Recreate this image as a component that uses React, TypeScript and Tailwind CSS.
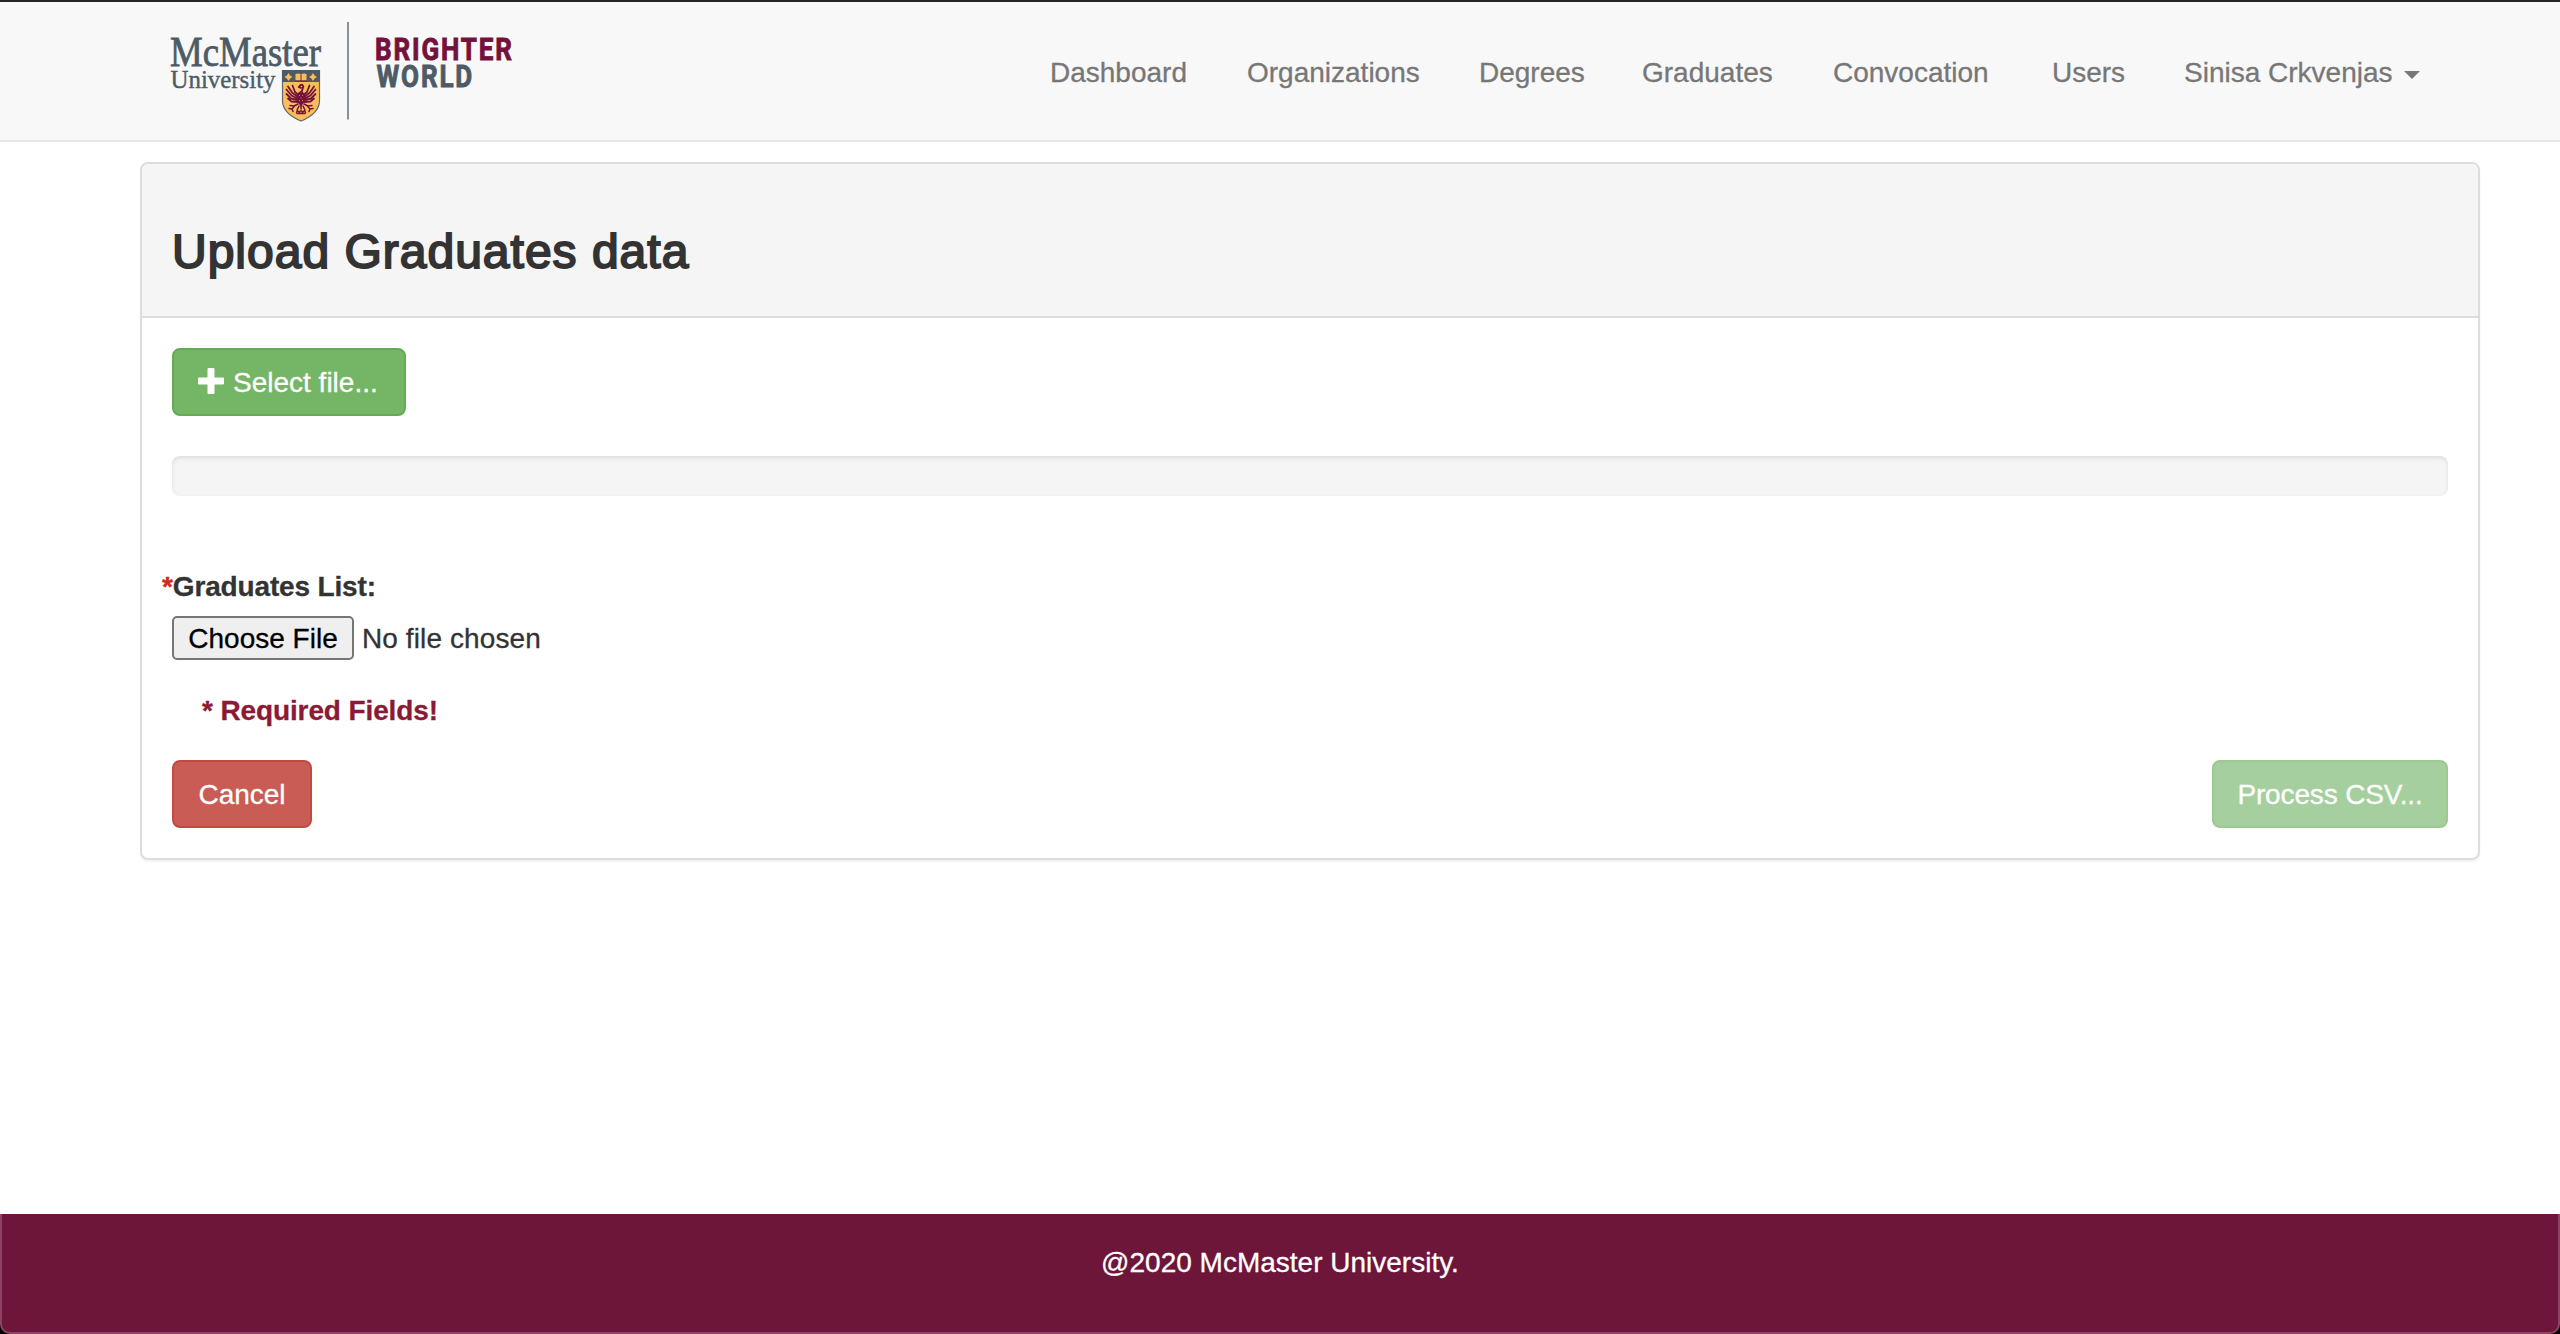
const navItems = [
  { label: "Dashboard", width: "w-[197px]" },
  { label: "Organizations", width: "w-[232px]" },
  { label: "Degrees", width: "w-[163px]" },
  { label: "Graduates", width: "w-[191px]" },
  { label: "Convocation", width: "w-[219px]" },
  { label: "Users", width: "w-[132px]" },
];

function Logo() {
  return (
    <svg width="360" height="102" viewBox="168 20 360 102" className="block overflow-visible [-webkit-text-stroke:0]">
      <g fill="#4d5b67" stroke="#4d5b67">
        <text x="170" y="66" fontFamily="Liberation Serif, serif" fontSize="42" textLength="151" lengthAdjust="spacingAndGlyphs" strokeWidth="0.8">
          McMaster
        </text>
        <text x="170.5" y="88" fontFamily="Liberation Serif, serif" fontSize="26" textLength="105" lengthAdjust="spacingAndGlyphs" strokeWidth="0.4">
          University
        </text>
        <text transform="translate(376.500 87) scale(0.84 1)" fontFamily="Roboto, sans-serif" fontWeight="700" fontSize="31" textLength="114" lengthAdjust="spacing" strokeWidth="0.9">
          WORLD
        </text>
      </g>
      <text transform="translate(375 60) scale(0.84 1)" fontFamily="Roboto, sans-serif" fontWeight="700" fontSize="31" textLength="163" lengthAdjust="spacing" fill="#73123b" stroke="#73123b" strokeWidth="0.9">
        BRIGHTER
      </text>
      <rect x="347" y="22" width="2" height="97.5" fill="#87909a" />
      <path d="M282.5 70.5h37v30q0 13-18.500 20.500Q282.500 113.500 282.500 100.500z" fill="#fabd5c" stroke="#5f6a70" strokeWidth="1.2" />
      <path d="M282 70h38v12h-38z" fill="#4d5b67" />
      <path d="M288.500 73l1.600 2.400 2.400 1.600-2.400 1.600-1.600 2.400-1.600-2.400-2.400-1.600 2.400-1.600zM313 73l1.600 2.400 2.400 1.600-2.400 1.600-1.600 2.400-1.600-2.400-2.400-1.600 2.400-1.600z" fill="#fabd5c" />
      <path d="M295.500 74q3-1 5.500.4 2.500-1.400 5.500-.4v6.500h-11z" fill="#fabd5c" />
      <path d="M295 81h12M301 74.500v6.500" stroke="#73123b" strokeWidth="0.9" fill="none" />
      <g fill="none" stroke="#73123b" strokeLinecap="round" strokeLinejoin="round">
        <path d="M299.300 86.300q2.500-3.200 4 .2l-1.300 4.500M298.800 87l2.200.8" strokeWidth="1.900" />
        <path d="M298 94.500l-3-2.500-2.500-6.500M297.500 96.500l-5-3.500-4.500-6.500M297.500 98.500l-6-3-5-6M297.500 100l-6.500-1.500-4.500-4.500M297.500 102l-6-.5-3.500-3" strokeWidth="1.800" />
        <path d="M304 94.500l3-2.500 2.500-6.500M304.500 96.500l5-3.500 4.500-6.500M304.500 98.500l6-3 5-6M304.500 100l6.500-1.500 4.500-4.500M304.500 102l6-.5 3.500-3" strokeWidth="1.800" />
        <path d="M298 104l-4 2-4-.5M295 105.500l-3 3.500-3-.5M292 109l1 2.500M304 104l4 2 4-.5M307 105.500l3 3.500 3-.5M310 109l-1 2.500" strokeWidth="1.500" />
        <path d="M301 105v4M299 106l-2 4M303 106l2 4M296.500 112.500q1-3 3 0 1.500-3.500 3 0 2-3 3 0M297 113.500h8" strokeWidth="1.500" />
      </g>
      <path d="M301 90.500l3.500 3 .3 8-3.800 5-3.800-5 .3-8z" fill="#73123b" />
      <path d="M299 95.500h.8M302.200 95.500h.8M300.600 98h.8M299 100.500h.8M302.200 100.500h.8" stroke="#fabd5c" strokeWidth="0.800" />
    </svg>
  );
}

export default function App() {
  return (
    <div className="flex h-[1334px] w-[2560px] flex-col overflow-hidden bg-white font-['Liberation_Sans',Arial,sans-serif] text-[28px] leading-[40px] text-[#333333] [-webkit-text-stroke-width:0.3px]">
      <header className="flex h-[142px] shrink-0 items-start justify-between border-t-2 border-b-2 border-t-[#272426] border-b-[#e7e7e7] bg-[#f8f8f8] pr-[140px] pl-[168px]">
        <a className="mt-[18px]">
          <Logo />
        </a>
        <nav className="mt-[51px] flex whitespace-nowrap text-[#777777]">
          {navItems.map((item) => (
            <a key={item.label} className={item.width}>
              {item.label}
            </a>
          ))}
          <a className="flex w-[236px] items-center justify-between">
            <span>Sinisa Crkvenjas</span>
            <span className="mt-[4px] h-0 w-0 border-x-8 border-t-8 border-x-transparent border-t-[#777777]" />
          </a>
        </nav>
      </header>

      <main className="mt-5 mr-20 ml-[140px] h-[698px] shrink-0 overflow-hidden rounded-lg border-2 border-[#dddddd] shadow-[0_2px_2px_rgba(0,0,0,0.05)]">
        <div className="h-[154px] border-b-2 border-[#dddddd] bg-[#f5f5f5] px-[30px] pt-[61px]">
          <h1 className="whitespace-nowrap text-[48px] leading-[53px] tracking-[1px] [-webkit-text-stroke-width:1.9px]">
            Upload Graduates data
          </h1>
        </div>
        <div className="flex flex-col items-start px-[30px] pt-[30px]">
          <button className="flex h-[68px] w-[234px] items-center whitespace-nowrap rounded-lg border-2 border-[#66a957] bg-[#74b566] pl-6 text-white">
            <svg width="26" height="26" viewBox="0 0 26 26" className="mr-[9px] -mt-0.5">
              <path d="M10.500 0h5a1 1 0 0 1 1 1v8.500H25a1 1 0 0 1 1 1v5a1 1 0 0 1-1 1h-8.500V25a1 1 0 0 1-1 1h-5a1 1 0 0 1-1-1v-8.500H1a1 1 0 0 1-1-1v-5a1 1 0 0 1 1-1h8.500V1a1 1 0 0 1 1-1z" fill="#fff" />
            </svg>
            <span className="pt-0.5">Select file...</span>
          </button>
          <div className="mt-10 h-10 w-full rounded-lg bg-[#f5f5f5] shadow-[inset_0_2px_4px_rgba(0,0,0,0.1)]" />
          <label className="-ml-[10px] mt-[71px] whitespace-nowrap font-bold tracking-[-0.15px]">
            <span className="text-[#d02b1d]">*</span>Graduates List:
          </label>
          <div className="mt-[9px] flex h-11 items-center whitespace-nowrap">
            <button className="flex h-11 w-[182px] items-center justify-center rounded-[5px] border-2 border-[#767676] bg-[#efefef] pt-0.5 text-black">
              Choose File
            </button>
            <span className="ml-[8px] pt-0.5 tracking-[0.1px]">No file chosen</span>
          </div>
          <p className="mt-[31px] ml-[30px] whitespace-nowrap font-bold tracking-[-0.12px] text-[#8b1a35]">
            * Required Fields!
          </p>
          <div className="mt-[29px] flex w-full justify-between">
            <button className="h-[68px] w-[140px] rounded-lg border-2 border-[#c34a41] bg-[#c95c54] pt-0.5 text-white">
              Cancel
            </button>
            <button className="h-[68px] w-[236px] whitespace-nowrap rounded-lg border-2 border-[#9cc892] bg-[#a5cf9e] pt-0.5 tracking-[-0.15px] text-white">
              Process CSV...
            </button>
          </div>
        </div>
      </main>

      <footer className="mt-auto h-[120px] shrink-0 bg-black">
        <div className="h-full rounded-b-[10px] border-x-2 border-b-2 border-[#8b4463] bg-[#6e153a] pt-[29px] text-center text-white">
          @2020 McMaster University.
        </div>
      </footer>
    </div>
  );
}
